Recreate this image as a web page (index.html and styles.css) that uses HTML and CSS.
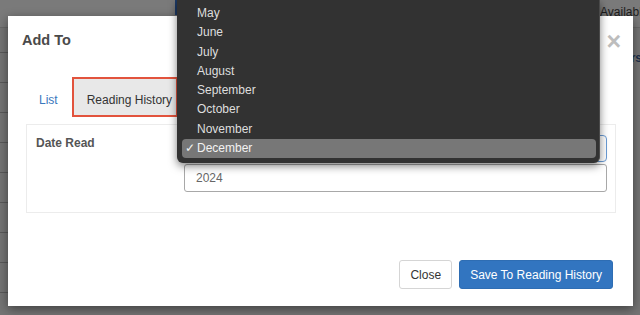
FILE: index.html
```html
<!DOCTYPE html>
<html lang="en">
<head>
    <meta charset="UTF-8">
    <title>Add To</title>
    <link rel="stylesheet" href="styles.css">
</head>
<body>
    <div class="page">
        <div class="page-top">
            <span class="page-status">Available</span>
        </div>
        <div class="page-row">
            <span class="page-link">Readers</span>
        </div>
    </div>

    <div class="modal">
        <div class="modal-header">
            <h4 class="modal-title">Add To</h4>
            <span class="close">&times;</span>
        </div>
        <div class="modal-body">
            <ul class="tabs">
                <li class="tab"><a class="tab-link">List</a></li>
                <li class="tab active"><a class="tab-link">Reading History</a></li>
            </ul>
            <div class="tab-panel">
                <label class="field-label">Date Read</label>
                <div class="fields">
                    <div class="month-select"></div>
                    <div class="year-input">2024</div>
                </div>
            </div>
        </div>
        <div class="modal-footer">
            <button class="btn btn-default">Close</button>
            <button class="btn btn-primary">Save To Reading History</button>
        </div>
    </div>

    <div class="select-edge"></div>
    <ul class="month-menu">
        <li class="month">May</li>
        <li class="month">June</li>
        <li class="month">July</li>
        <li class="month">August</li>
        <li class="month">September</li>
        <li class="month">October</li>
        <li class="month">November</li>
        <li class="month selected"><span class="check">&#10003;</span>December</li>
    </ul>
</body>
</html>
```

FILE: styles.css
```css
body {
    margin: 0;
    width: 640px;
    height: 315px;
    overflow: hidden;
    font-family: 'Liberation Sans', Arial, sans-serif;
    font-size: 12px;
    background-color: #747474;
    position: relative;
}

/* page behind the backdrop */
.page {
    height: 315px;
    background:
        repeating-linear-gradient(to bottom, transparent 0, transparent 22px, #595959 22px, #595959 23px, transparent 23px, transparent 30px) left top / 8px 315px no-repeat,
        #747474;
}

.page-top {
    display: flex;
    justify-content: flex-end;
    height: 27px;
    border-bottom: 1px solid #686868;
    background-color: #7a7a7a;
}

.page-status {
    width: 40px;
    overflow: hidden;
    padding-top: 5px;
    font-size: 12px;
    color: #1e1e1e;
    white-space: nowrap;
}

.page-row {
    display: flex;
    justify-content: flex-end;
    padding-top: 23px;
}

.page-link {
    width: 9px;
    overflow: hidden;
    white-space: nowrap;
    direction: rtl;
    margin-right: -2px;
    font-size: 12px;
    font-weight: bold;
    color: #1c2f4a;
}

/* modal */
.modal {
    position: absolute;
    left: 8px;
    top: 16px;
    width: 625px;
    height: 290px;
    background-color: #fff;
    box-shadow: 0 3px 10px rgba(0, 0, 0, 0.45);
    display: flex;
    flex-direction: column;
    box-sizing: border-box;
}

.modal-header {
    display: flex;
    justify-content: space-between;
    align-items: flex-start;
    padding: 16px 12px 0 14px;
    height: 46px;
    box-sizing: border-box;
}

.modal-title {
    margin: 0;
    font-size: 14.5px;
    line-height: 17px;
    font-weight: bold;
    color: #4a4a4a;
}

.close {
    font-size: 25px;
    line-height: 20px;
    font-weight: bold;
    color: #bdbdbd;
    margin-top: -1px;
}

.modal-body {
    padding: 15px 17px 0 18px;
    flex: 1;
}

.tabs {
    list-style: none;
    margin: 0 0 7px;
    padding: 0;
    display: flex;
    align-items: flex-end;
}

.tab-link {
    display: block;
    line-height: 14px;
    color: #3a78bd;
    padding: 16px 13px 10px 13px;
}

.tab.active .tab-link {
    color: #333;
    background-color: #e8e8e8;
    border: 2px solid #e2533d;
    padding: 14px 4px 8px 13px;
    margin-left: 1px;
}

.tab-panel {
    display: grid;
    grid-template-columns: 148px 1fr;
    border: 1px solid #ececec;
    padding: 10px 8px 21px 9px;
    height: 89px;
    box-sizing: border-box;
}

.field-label {
    margin-top: 1px;
    line-height: 14px;
    font-weight: bold;
    color: #555;
}

.fields {
    display: flex;
    flex-direction: column;
    gap: 2px;
}

.month-select {
    height: 27px;
    border: 1px solid #6a9bd4;
    border-radius: 4px;
    box-sizing: border-box;
}

.year-input {
    height: 28px;
    border: 1px solid #a8a8a8;
    border-radius: 3px;
    box-sizing: border-box;
    padding-left: 11px;
    line-height: 26px;
    color: #666;
}

.modal-footer {
    display: flex;
    justify-content: flex-end;
    gap: 7px;
    padding: 0 20px 17px 0;
}

.btn {
    height: 29px;
    padding: 0 10px;
    font-family: inherit;
    font-size: 12px;
    border-radius: 3px;
    box-sizing: border-box;
}

.btn-default {
    background-color: #fff;
    border: 1px solid #d5d5d5;
    color: #333;
}

.btn-primary {
    background-color: #3275c0;
    border: 1px solid #2e6db3;
    color: #fff;
}

/* native select popup */
.select-edge {
    position: absolute;
    left: 175px;
    top: 0;
    width: 2px;
    height: 15px;
    background-color: #1d3a66;
}

.month-menu {
    position: absolute;
    left: 177px;
    top: 0;
    width: 423px;
    height: 163px;
    margin: 0;
    padding: 4px 0 0;
    list-style: none;
    box-sizing: border-box;
    background-color: #323232;
    border-radius: 0 0 6px 6px;
    border-right: 1px solid #4a4a4a;
    box-shadow: 0 3px 8px rgba(0, 0, 0, 0.5);
}

.month {
    height: 19.3px;
    line-height: 19.3px;
    padding-left: 20px;
    color: #dedede;
    position: relative;
}

.month.selected {
    background-color: #777;
    border-radius: 4px;
    margin: 0 3px 0 5px;
    padding-left: 15px;
    color: #f2f2f2;
}

.check {
    position: absolute;
    left: 3px;
    top: 0;
}
```
